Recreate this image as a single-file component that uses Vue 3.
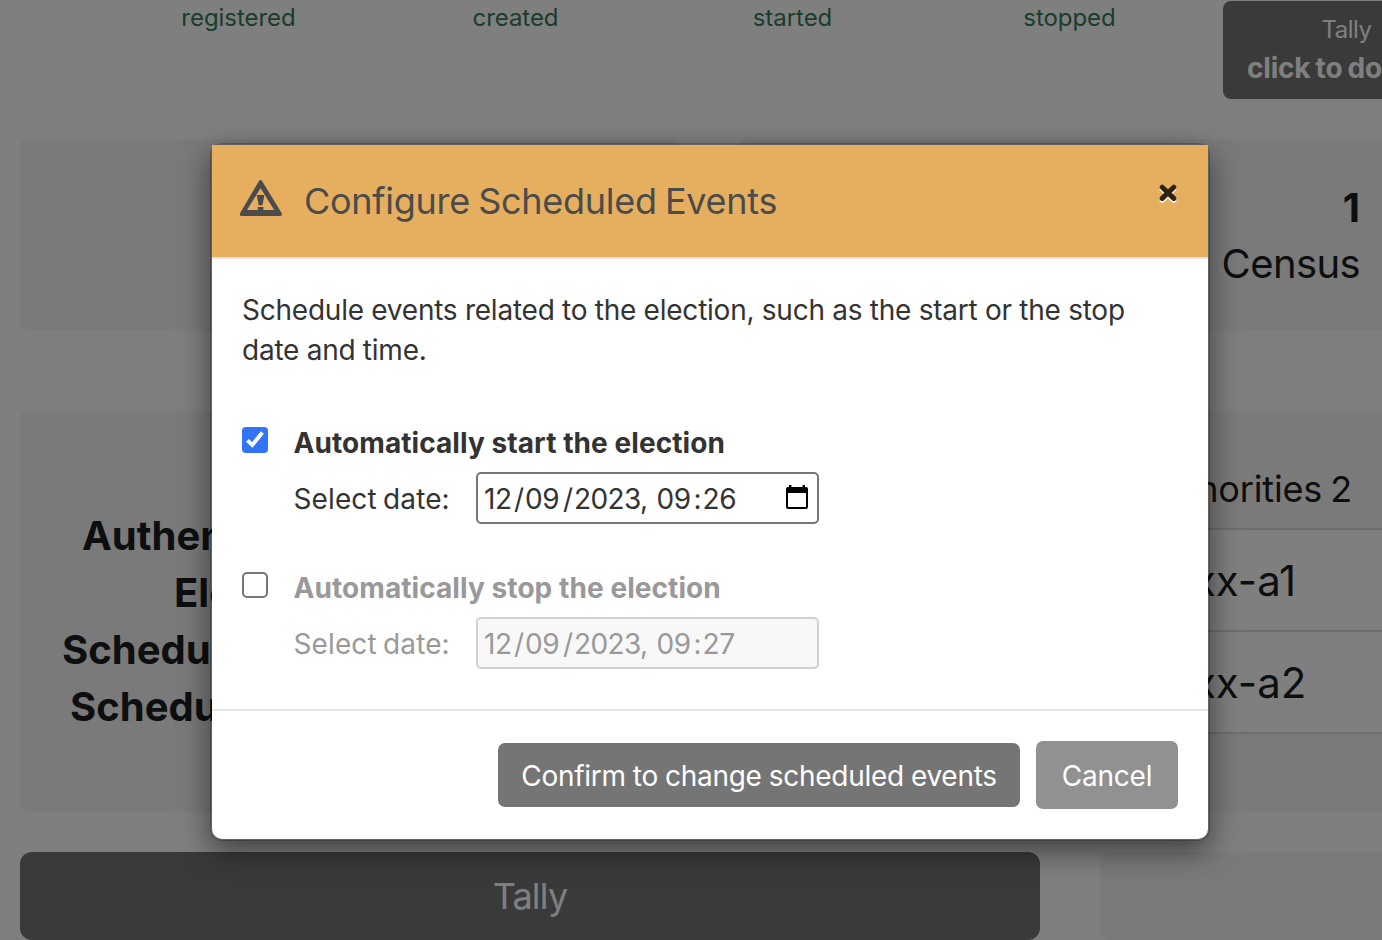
<script setup>
const stages = ['registered', 'created', 'started', 'stopped']

const facts = [
  { label: 'Authentication', start: 82 },
  { label: 'Election', start: 174 },
  { label: 'Scheduled start', start: 62 },
  { label: 'Scheduled stop', start: 70 },
]

const authorities = ['xxx-a1', 'xxx-a2']

const events = [
  { title: 'Automatically start the election', enabled: true, minute: '26' },
  { title: 'Automatically stop the election', enabled: false, minute: '27' },
]
</script>

<template>
  <div class="screen">
    <div class="page">
      <div class="timeline">
        <span v-for="s in stages" :key="s" class="stage">{{ s }}</span>
        <div class="tally-step">
          <span class="tally-name">Tally</span>
          <strong class="tally-hint">click to download</strong>
        </div>
      </div>

      <div class="row stats">
        <div class="card"></div>
        <div class="card stat">
          <strong>1</strong>
          <span class="census">Census</span>
        </div>
      </div>

      <div class="row details">
        <div class="card facts">
          <strong v-for="f in facts" :key="f.label" :style="{ paddingLeft: f.start - 20 + 'px' }">{{ f.label }}</strong>
        </div>
        <div class="card auths">
          <div class="auth-head">Authorities 2</div>
          <div v-for="a in authorities" :key="a" class="auth-row">{{ a }}</div>
        </div>
      </div>

      <div class="row actions">
        <div class="tally-btn">Tally</div>
        <div class="card"></div>
      </div>
    </div>

    <div class="backdrop">
      <div class="modal">
        <header class="head">
          <svg class="warn" viewBox="0 0 42 36" width="42" height="36">
            <path d="M18.8 1.2Q20.5-1 22.2 1.2L41.6 33Q42.6 36 40 36H1.6Q-1 36 .2 33ZM20.6 8.2 7 30H34.2Z" fill="#4b4b4b" fill-rule="evenodd" />
            <path d="M16.8 15H24.4L22.5 25.2H18.7ZM17.8 27H23.4V30.5H17.8Z" fill="#4b4b4b" />
          </svg>
          <h3>Configure Scheduled Events</h3>
          <svg class="close" viewBox="0 0 18 20" width="18" height="20">
            <g fill="none" stroke-width="5" stroke-linecap="round">
              <path d="M3.2 5.2 14.8 16.4M14.8 5.2 3.2 16.4" stroke="#fff3df" />
              <path d="M3.2 3.2 14.8 14.4M14.8 3.2 3.2 14.4" stroke="#2e2310" />
            </g>
          </svg>
        </header>

        <section class="body">
          <p>Schedule events related to the election, such as the start or the stop<br />date and time.</p>
          <div v-for="e in events" :key="e.title" class="event" :class="{ off: !e.enabled }">
            <div class="check">
              <svg v-if="e.enabled" viewBox="0 0 26 26" width="26" height="26">
                <path d="M5.4 13.4 10.2 18 20.4 5.6" fill="none" stroke="#fff" stroke-width="3.9" />
              </svg>
            </div>
            <div class="fields">
              <div class="event-title">{{ e.title }}</div>
              <div class="date-row">
                <span class="date-label">Select date:</span>
                <div class="date-input">
                  <span class="d1">12</span><span class="s1">/</span><span class="d2">09</span><span class="s2">/</span><span class="yr">2023,</span><span class="hr">09</span><span class="co">:</span><span class="mi">{{ e.minute }}</span>
                  <svg v-if="e.enabled" class="cal" viewBox="0 0 22 24" width="22" height="24">
                    <path d="M3 0H5.4V2H16.6V0H19V2H20Q22 2 22 4V22Q22 24 20 24H2Q0 24 0 22V4Q0 2 2 2H3ZM2 8V22H20V8Z" fill="#000" fill-rule="evenodd" />
                  </svg>
                </div>
              </div>
            </div>
          </div>
        </section>

        <footer class="foot">
          <button class="confirm">Confirm to change scheduled events</button>
          <button class="cancel">Cancel</button>
        </footer>
      </div>
    </div>
  </div>
</template>

<style>
body {
  margin: 0;
  overflow: hidden;
}
</style>

<style scoped>
* {
  box-sizing: border-box;
}
.screen {
  position: relative;
  width: 1382px;
  height: 940px;
  overflow: hidden;
  background: #fff;
  font-family: Inter, "Liberation Sans", sans-serif;
  color: #191c21;
}
.page {
  width: 1382px;
  height: 940px;
  overflow: hidden;
}
.timeline {
  display: grid;
  grid-template-columns: repeat(5, 277px);
  height: 139px;
  padding-left: 100px;
}
.stage {
  padding-top: 3px;
  text-align: center;
  font-size: 24px;
  line-height: 30px;
  letter-spacing: -0.05px;
  color: #367a58;
}
.tally-step {
  justify-self: center;
  display: flex;
  flex-direction: column;
  align-items: center;
  width: 247px;
  height: 98px;
  margin-top: 1px;
  padding-top: 9px;
  border-radius: 8px;
  background: #747474;
  color: #fff;
  white-space: nowrap;
}
.tally-name {
  font-size: 24px;
  line-height: 40px;
  letter-spacing: -0.5px;
}
.tally-hint {
  align-self: flex-start;
  padding-left: 24px;
  font-size: 28px;
  line-height: 37px;
  letter-spacing: -0.2px;
  word-spacing: -1.2px;
}
.row {
  display: grid;
  grid-template-columns: 660px 660px;
  column-gap: 60px;
  padding-left: 20px;
}
.card {
  border-radius: 8px;
  background: #f5f5f5;
}
.stats {
  height: 192px;
  margin-bottom: 80px;
}
.stat {
  display: flex;
  flex-direction: column;
  align-items: flex-end;
  padding: 41px 40px 0 0;
  font-size: 40px;
  line-height: 56px;
}
.census {
  letter-spacing: -0.6px;
}
.details {
  height: 401px;
  margin-bottom: 40px;
}
.facts {
  display: flex;
  flex-direction: column;
  padding-top: 96px;
  font-size: 40px;
  line-height: 57px;
  white-space: nowrap;
}
.auth-head {
  height: 117px;
  padding: 57px 48px 0 0;
  text-align: right;
  font-size: 36px;
  line-height: 42px;
  letter-spacing: -0.15px;
  word-spacing: -2px;
}
.auth-row {
  height: 102px;
  padding: 0 0 0 430px;
  border-top: 2px solid #dcdcdc;
  background: #fff;
  font-size: 42px;
  line-height: 102px;
}
.auth-row:last-child {
  height: 104px;
  border-bottom: 2px solid #dcdcdc;
}
.actions {
  grid-template-columns: 1020px 400px;
  height: 88px;
}
.tally-btn {
  border-radius: 12px;
  background: #747474;
  color: #fff;
  text-align: center;
  font-size: 36px;
  line-height: 88px;
  letter-spacing: -0.8px;
}
.backdrop {
  position: absolute;
  inset: 0;
  padding: 143px 0 0 210px;
  background: rgba(0, 0, 0, 0.5);
}
.modal {
  width: 1000px;
  height: 698px;
  border: 2px solid rgba(0, 0, 0, 0.2);
  border-radius: 12px;
  background: #fff;
  background-clip: padding-box;
  box-shadow: 0 10px 30px rgba(0, 0, 0, 0.5);
  color: #333;
}
.head {
  display: flex;
  align-items: flex-start;
  height: 114px;
  padding: 35px 31px 0 27.5px;
  border-bottom: 2px solid #e5e5e5;
  background: #e6af5f;
}
.head h3 {
  flex: 1;
  margin: 0 0 0 22.5px;
  font-size: 36px;
  font-weight: 400;
  line-height: 42px;
  letter-spacing: -0.29px;
  word-spacing: -1.5px;
  color: #4b4b4b;
}
.close {
  margin-top: 4px;
}
.body {
  height: 450px;
  padding: 31px 30px 0;
  font-size: 28px;
  line-height: 40px;
}
.body p {
  margin: 0 0 52px;
  letter-spacing: -0.23px;
  word-spacing: -0.15px;
}
.event {
  display: flex;
  gap: 25.5px;
  height: 101px;
  margin-bottom: 44px;
}
.check {
  width: 26px;
  height: 26px;
  margin-top: 5px;
  border-radius: 4px;
  background: #3174f6;
}
.check svg {
  display: block;
}
.off .check {
  border: 2px solid #767676;
  border-radius: 5px;
  background: #fff;
}
.off {
  color: #999;
}
.event-title {
  height: 50px;
  padding-top: 1px;
  font-weight: 700;
  letter-spacing: 0.07px;
}
.date-row {
  display: flex;
  align-items: center;
}
.date-label {
  width: 182.5px;
  padding-top: 2px;
  letter-spacing: 0.12px;
  word-spacing: -1.7px;
}
.date-input {
  display: flex;
  align-items: center;
  width: 343px;
  height: 52px;
  padding: 2px 9px 0 6px;
  border: 2px solid #767676;
  border-radius: 5px;
}
.off .date-input {
  border-color: #d1d1d1;
  background: #f8f8f8;
}
.d1 {
  width: 30px;
  letter-spacing: -0.5px;
}
.s1 {
  width: 11px;
}
.d2 {
  width: 38px;
  letter-spacing: -0.3px;
}
.s2 {
  width: 11px;
}
.yr {
  width: 82.5px;
  letter-spacing: -0.6px;
}
.hr {
  width: 37px;
  letter-spacing: -0.4px;
}
.co {
  width: 9px;
}
.mi {
  letter-spacing: -0.3px;
}
.cal {
  margin: -5px 0 0 auto;
}
.foot {
  display: flex;
  align-items: center;
  justify-content: flex-end;
  gap: 16px;
  height: 130px;
  padding: 0 30px;
  border-top: 2px solid #e5e5e5;
}
.foot button {
  margin: 0;
  padding: 2px 0 0;
  border: 0;
  border-radius: 7px;
  color: #fff;
  font-family: inherit;
  font-size: 28px;
}
.foot .confirm {
  width: 522px;
  height: 64px;
  background: #757575;
  letter-spacing: -0.28px;
  word-spacing: -0.5px;
}
.foot .cancel {
  width: 142px;
  height: 68px;
  background: #919191;
  letter-spacing: -0.2px;
}
</style>
